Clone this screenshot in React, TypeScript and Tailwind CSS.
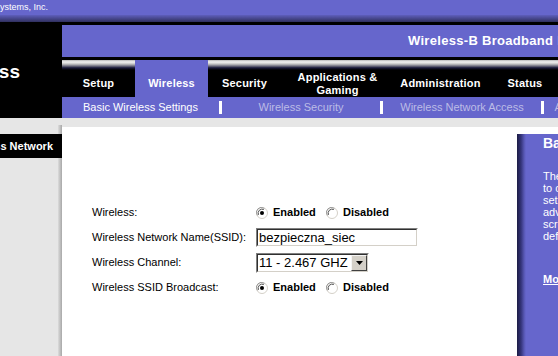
import React from "react";

function Radio({ checked }: { checked?: boolean }) {
  return (
    <svg width="12" height="12" viewBox="0 0 12 12" className="shrink-0">
      <circle cx="6" cy="6" r="5.5" fill="#ffffff" stroke="#d4d0c8" />
      <path d="M1.4 8.4 A5 5 0 0 1 8.4 1.4" fill="none" stroke="#9a9a9a" strokeWidth="1" />
      <path d="M2.5 7.8 A4 4 0 0 1 7.8 2.5" fill="none" stroke="#505050" strokeWidth="1" />
      {checked && <circle cx="6" cy="6" r="2" fill="#000000" />}
    </svg>
  );
}

function RadioPair() {
  return (
    <div className="flex items-center">
      <Radio checked />
      <span className="ml-[5px] w-[53px] text-[11px] font-bold leading-none">Enabled</span>
      <Radio />
      <span className="ml-[5px] text-[11px] font-bold leading-none">Disabled</span>
    </div>
  );
}

function Tab({ label, w, active }: { label: React.ReactNode; w: string; active?: boolean }) {
  return (
    <div className={`${w} flex flex-col shrink-0`}>
      <div
        className={
          active
            ? "h-[10px] bg-[#6666cc]"
            : "h-[10px] bg-[linear-gradient(to_bottom,#b8b8b8_0%,#f2f2f2_20%,#c4c4c4_40%,#707080_60%,#1a1a3a_78%,#000000_100%)]"
        }
      />
      <div
        className={`h-[27px] flex items-center justify-center text-center text-white text-[11px] font-bold leading-[13px] tracking-[0.2px] ${
          active ? "bg-[#6666cc]" : "bg-black"
        }`}
      >
        {label}
      </div>
    </div>
  );
}

export default function App() {
  return (
    <div className="w-[558px] h-[356px] overflow-hidden bg-white font-['Liberation_Sans',Arial,sans-serif] text-black">
      {/* top band */}
      <div className="h-[15px] bg-[#6666cc] flex">
        <div className="w-[48px] flex justify-end items-center overflow-hidden">
          <span className="shrink-0 whitespace-nowrap text-[9px] leading-none text-white">Cisco Systems, Inc.</span>
        </div>
      </div>
      <div className="h-[7px] bg-[linear-gradient(to_bottom,#5e5ebc,#30305e)]" />

      {/* header */}
      <div className="flex h-[96px]">
        <div className="w-[62px] bg-black flex justify-end pr-[42px] pt-[40px] overflow-hidden">
          <span className="shrink-0 whitespace-nowrap text-[19px] leading-[19px] font-bold text-white">Wireless</span>
        </div>
        <div className="flex-1 flex flex-col min-w-0">
          <div className="h-[3px] bg-black" />
          <div className="h-[32px] bg-[#6666cc] flex items-center pl-[346px] overflow-hidden">
            <span className="shrink-0 whitespace-nowrap text-[13px] font-bold text-white tracking-[0.3px]">
              Wireless-B Broadband Router
            </span>
          </div>
          <div className="h-[3px] bg-black" />
          <div className="h-[37px] flex overflow-hidden">
            <Tab label="Setup" w="w-[73px]" />
            <Tab label="Wireless" w="w-[73px]" active />
            <Tab label="Security" w="w-[73px]" />
            <Tab
              label={
                <span>
                  Applications &amp;
                  <br />
                  Gaming
                </span>
              }
              w="w-[113px]"
            />
            <Tab label="Administration" w="w-[93px]" />
            <Tab label="Status" w="w-[76px]" />
          </div>
          <div className="h-[21px] bg-[#6666cc] flex items-center overflow-hidden text-[11px] leading-none">
            <div className="w-[157px] shrink-0 flex justify-center text-white whitespace-nowrap">Basic Wireless Settings</div>
            <div className="w-[3px] h-[13px] bg-white shrink-0" />
            <div className="w-[158px] shrink-0 flex justify-center text-[#bcbce6] whitespace-nowrap">Wireless Security</div>
            <div className="w-[3px] h-[13px] bg-white shrink-0" />
            <div className="w-[158px] shrink-0 flex justify-center text-[#bcbce6] whitespace-nowrap">Wireless Network Access</div>
            <div className="w-[3px] h-[13px] bg-white shrink-0" />
            <div className="w-[158px] shrink-0 flex justify-center text-[#bcbce6] whitespace-nowrap">Advanced Wireless Settings</div>
          </div>
        </div>
      </div>

      {/* body */}
      <div className="flex h-[238px]">
        <div className="w-[62px] flex flex-col shrink-0">
          <div className="h-[7px] bg-[#e6e6e6]" />
          <div className="h-[9px] flex">
            <div className="w-[58px] bg-[#e6e6e6]" />
            <div className="w-[4px] bg-[linear-gradient(to_right,#dcdcdc,#a8a8a8)]" />
          </div>
          <div className="h-[24px] bg-black flex justify-end items-center pr-[9px] overflow-hidden">
            <span className="shrink-0 whitespace-nowrap text-[11px] font-bold text-white leading-none">Wireless Network</span>
          </div>
          <div className="flex-1 flex">
            <div className="w-[58px] bg-[#e6e6e6]" />
            <div className="w-[4px] bg-[linear-gradient(to_right,#dcdcdc,#a8a8a8)]" />
          </div>
        </div>

        <div className="flex-1 flex flex-col min-w-0">
          <div className="h-[9px] bg-[#e6e6e6]" />
          <div className="flex-1 flex">
            <div className="w-[455px] shrink-0 bg-white pt-[73px] pl-[30px] text-[11px]">
              <div className="h-[25px] flex items-center">
                <div className="w-[164px]">Wireless:</div>
                <RadioPair />
              </div>
              <div className="h-[25px] flex items-center">
                <div className="w-[164px]">Wireless Network Name(SSID):</div>
                <div className="w-[162px] h-[19px] border border-t-[#808080] border-l-[#808080] border-b-white border-r-white">
                  <div className="h-full border border-t-[#303030] border-l-[#303030] border-b-[#d4d0c8] border-r-[#d4d0c8] bg-white flex items-center pl-[1px] text-[13px] leading-none">
                    bezpieczna_siec
                  </div>
                </div>
              </div>
              <div className="h-[25px] flex items-center">
                <div className="w-[164px]">Wireless Channel:</div>
                <div className="w-[113px] h-[20px] border border-t-[#808080] border-l-[#808080] border-b-white border-r-white">
                  <div className="h-full border border-t-[#303030] border-l-[#303030] border-b-[#d4d0c8] border-r-[#d4d0c8] bg-white flex items-center">
                    <div className="flex-1 pl-[1px] text-[13px] leading-none whitespace-nowrap overflow-hidden">11 - 2.467 GHZ</div>
                    <div className="w-[16px] h-full bg-[#d4d0c8] border border-t-[#f4f4f4] border-l-[#f4f4f4] border-b-[#404040] border-r-[#404040] flex items-center justify-center">
                      <svg width="7" height="4" viewBox="0 0 7 4">
                        <path d="M0 0 H7 L3.5 4 Z" fill="#000000" />
                      </svg>
                    </div>
                  </div>
                </div>
              </div>
              <div className="h-[25px] flex items-center">
                <div className="w-[164px]">Wireless SSID Broadcast:</div>
                <RadioPair />
              </div>
            </div>

            <div className="flex-1 flex flex-col min-w-0">
              <div className="h-[7px] bg-white" />
              <div className="flex-1 flex">
                <div className="w-[9px] shrink-0 bg-[linear-gradient(to_right,#1c1c44,#34347a_45%,#5858b4_80%,#6666cc)]" />
                <div className="flex-1 bg-[#6666cc] text-white pl-[17px] pt-[1px] overflow-hidden whitespace-nowrap">
                  <div className="text-[14px] font-bold leading-[16px]">Basic Wireless Settings</div>
                  <div className="mt-[19px] text-[11px] leading-[12px]">
                    <div>The Wireless tab allows you</div>
                    <div>to configure the wireless</div>
                    <div>settings. For more</div>
                    <div>advanced settings, see</div>
                    <div>screens. Change the</div>
                    <div>default values.</div>
                  </div>
                  <div className="mt-[31px] text-[11px] leading-[12px] font-bold underline">More...</div>
                </div>
              </div>
            </div>
          </div>
        </div>
      </div>
    </div>
  );
}
